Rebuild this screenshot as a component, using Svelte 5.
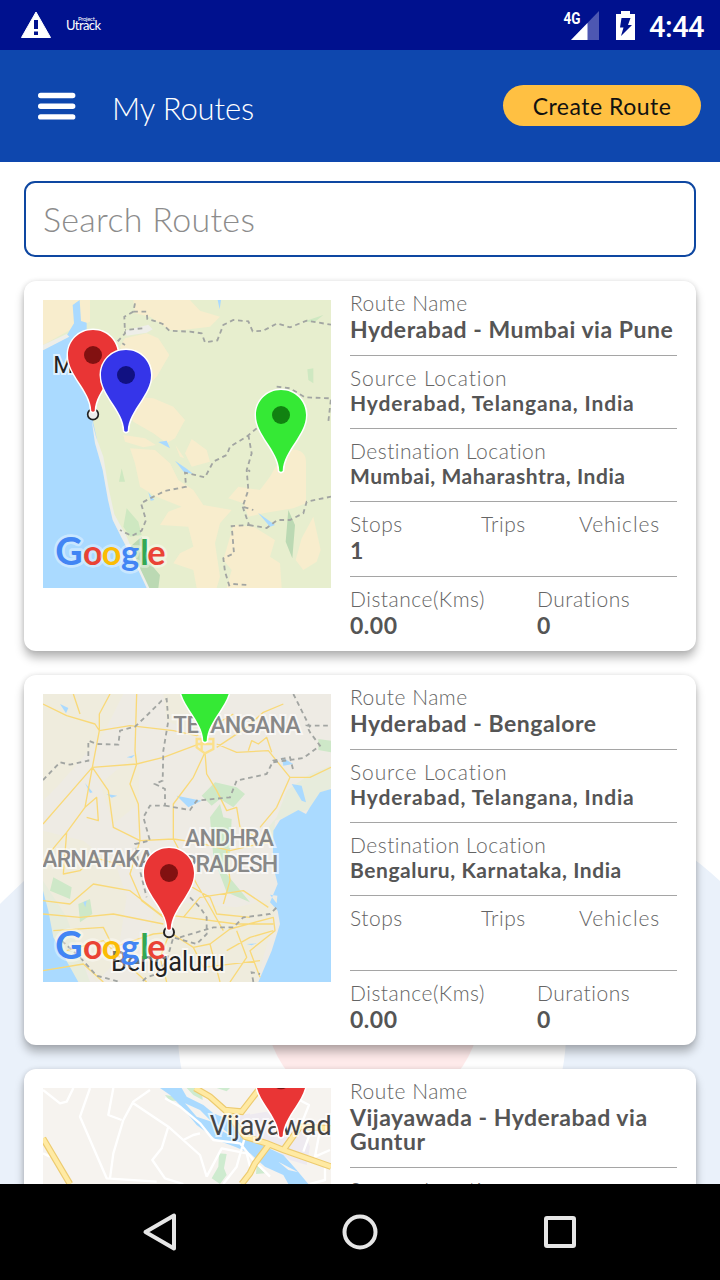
<script>
  const routes = [
    { name: 'Hyderabad - Mumbai via Pune', source: 'Hyderabad, Telangana, India', destination: 'Mumbai, Maharashtra, India', stops: '1', map: 'mumbai' },
    { name: 'Hyderabad - Bengalore', source: 'Hyderabad, Telangana, India', destination: 'Bengaluru, Karnataka, India', stops: '', map: 'bengaluru' },
    { name: 'Vijayawada - Hyderabad via Guntur', source: 'Vijayawada, Andhra Pradesh, India', destination: 'Hyderabad, Telangana, India', stops: '', map: 'vijayawada' }
  ];
</script>

{#snippet pin(x, y, fill, dot)}
  <g transform="translate({x} {y})">
    <path d="M0-75C42-75 75-42 75 0C75 32 58 56 43 80C24 109 6 135 5 168Q0 173-5 168C-6 135-24 109-43 80C-58 56-75 32-75 0C-75-42-42-75 0-75Z" fill={fill} stroke="#fff" stroke-width="9" paint-order="stroke" />
    <circle r="27" fill={dot} />
  </g>
{/snippet}

{#snippet google()}
  <g class="google">
    <text y="825"><tspan class="capital" x="76" fill="#4285f4">G</tspan><tspan x="159" fill="#ea4335">o</tspan><tspan x="215" fill="#fbbc05">o</tspan><tspan x="273" fill="#4285f4">g</tspan><tspan x="331" fill="#34a853">l</tspan><tspan x="352" fill="#ea4335">e</tspan></text>
  </g>
{/snippet}

<div class="screen">
  <div class="status">
    <svg class="warn" width="32" height="28" viewBox="0 0 32 28"><path d="M16 1L30.500 26.500H1.500Z" fill="#fff" stroke="#fff" stroke-linejoin="round" /><path d="M14 9h4v9h-4zM14 20.500h4v3.500h-4z" fill="#00118e" /></svg>
    <div class="carrier">Utrack<span>Project</span></div>
    <div class="indicators">
      <svg width="38" height="34" viewBox="0 0 38 34"><path d="M9 32L37 3V32Z" fill="#4d57b2" /><path d="M9 32L25.500 15V32Z" fill="#fff" /><text x="1.500" y="16" font-family="Roboto" font-size="17" font-weight="700" fill="#fff" textLength="17" lengthAdjust="spacingAndGlyphs">4G</text></svg>
      <svg class="battery" width="20" height="30" viewBox="0 0 20 30"><path d="M5 1h9v3h5v26H0V4h5z" fill="#fff" /><path d="M5.500 8h9l-2.500 7h4L5 26l2.500-8.500H4z" fill="#00118e" /></svg>
      <span class="clock">4:44</span>
    </div>
  </div>

  <header>
    <svg width="38" height="28" viewBox="0 0 38 28"><path d="M2.700 3.500H34.700M2.700 14.200H34.700M2.700 24.900H34.700" stroke="#fff" stroke-width="5.400" stroke-linecap="round" /></svg>
    <h1>My Routes</h1>
    <button>Create Route</button>
  </header>

  <main>
    <svg class="backdrop" width="720" height="1022" viewBox="0 162 720 1022">
      <circle cx="372" cy="1266" r="519" fill="#eaf1fa" />
      <circle cx="372" cy="1033" r="194" fill="#fefefe" />
      <circle cx="373" cy="1006" r="108" fill="#feeaea" />
    </svg>
    <input placeholder="Search Routes" />
    {#each routes as route}
      <article>
        {#if route.map === 'mumbai'}
          <svg class="map" viewBox="39 30 864 864">
            <path fill="#e7eece" d="M39 30H903V894H39Z" />
            <g fill="#f8edcd">
              <path d="M39 30H180V95L120 120L39 165ZM310 30H480L510 62L570 80L540 110L460 120L420 120L360 80L315 70Z" />
              <path d="M285 145L350 130L385 145L418 195L380 260L350 290L300 240L270 170Z" />
              <path d="M290 320L370 325L430 350L465 390L435 445L410 460L370 430L310 395L285 345ZM280 435L345 445L378 465L340 472L285 455ZM485 447L530 480L540 515L485 530L465 490ZM436 465L463 505L450 500Z" />
              <path d="M300 475L375 480L420 520L445 570L490 600L520 645L605 660L570 700L555 760L570 860L560 894H500L490 840L430 820L450 790L490 770L475 710L390 705L415 665L455 650L380 620L330 590L315 520Z" />
              <path d="M765 480Q830 470 828 520V640L790 655L700 670L655 680L640 640L595 625L625 590L690 600L720 560ZM610 705L670 710L735 750L720 800L750 820L755 894H590L605 840L580 810ZM850 680L872 780L860 815L820 840L797 810L815 745Z" />
            </g>
            <path fill="#cee8c1" d="M832 238L850 235V280L835 270ZM275 535L285 575L267 575ZM290 655L325 695L335 735L300 740L280 710ZM820 95L880 75L855 95Z" />
            <path fill="#bbd9b3" d="M335 740L360 820L390 855L385 894H350L325 840L300 770ZM775 660L795 705L787 805L767 755Z" />
            <path fill="#aadaff" d="M128 45L149 30L153 93L170 98V150L190 400Q215 510 238 635Q250 690 310 790L355 894H39V180L105 145L132 100Z" />
            <path fill="#eeeee9" d="M39 165L110 132L118 140L39 181ZM185 390L198 440L220 500L235 590L253 673L290 740L330 835L358 894H350L320 830L273 740L248 690L234 630L218 540L195 460ZM285 122L355 104L368 118L350 128L290 137Z" />
            <path fill="#aadaff" d="M385 456L410 452L420 475ZM435 512L470 536L490 552L462 547ZM355 607L373 630L362 632ZM684 668L735 705L720 710ZM563 30H573L569 58Z" />
            <path class="border" d="M315 40L310 65L350 65L352 87L375 93L398 102L418 122L480 125L515 130L525 157L562 151L580 105L610 90L655 94L668 124L700 122L742 100L780 112L830 92L903 104M310 65L283 80L285 130L265 152L285 165M337 115L285 120M740 290L780 295L825 322L903 325L895 395M680 415L650 440L600 470L590 495L550 515L525 562L465 548L468 590L405 603L360 625L333 640L348 690L335 722L305 738L270 720M655 435L665 490L650 540L655 600L638 650L670 660M655 540L660 545M638 650L657 705L605 708L612 790L580 805L585 845L600 894M657 705L710 714L742 690L780 690L820 670L830 635L903 620M610 882L655 885" />
            <text class="place" x="70" y="248" font-size="70">M</text>
            <circle cx="189" cy="373" r="16" fill="#eee" stroke="#222" stroke-width="5" />
            {@render pin(189, 195, '#e93535', '#821111')}
            {@render pin(288, 255, '#3535e9', '#111182')}
            {@render pin(753, 375, '#35e935', '#118211')}
            {@render google()}
          </svg>
        {:else if route.map === 'bengaluru'}
          <svg class="map" viewBox="39 30 864 864">
            <path fill="#eeebe4" d="M39 30H903V894H39Z" />
            <path fill="#efecdd" d="M39 30H280L220 150L80 310L39 350ZM400 30H520L500 150L410 110ZM210 300L330 200L325 360L250 420ZM39 440L160 470L260 550L290 640L260 830L200 894L39 700ZM380 650L620 670L750 640L680 894H320Z" />
            <path fill="#e7ecdc" d="M903 245L840 270L770 320L740 400L690 460L730 490L735 410L840 375L903 310ZM39 590L110 700L180 894H100L39 700Z" />
            <path fill="#cee8c8" d="M515 335L555 295L620 310L645 330L610 370L570 345L545 365ZM540 400L570 360L580 400L605 405L600 500L590 570L660 655L590 625L550 520ZM70 580L125 610L120 645L60 620ZM145 660L180 645L187 690L150 715ZM865 165L903 170V205L865 198Z" />
            <path fill="#aadaff" d="M903 315L870 325L840 370L828 390L805 378L750 408L730 440L728 540L743 600L720 655L743 680L750 720L725 800L685 894H903ZM39 620L55 680L70 760L145 894H39ZM90 60L115 72L108 88ZM165 297L188 325L180 327ZM230 330L262 335L245 341ZM290 220L315 212L305 222ZM440 335L515 350L475 370ZM755 220L790 240L760 245ZM785 300L815 305L828 355L815 350ZM160 655L170 650L166 670ZM650 780L680 778L665 784ZM720 632L742 635L740 658Z" />
            <path class="road" d="M39 60L110 95L195 120L208 140L300 125L430 140L500 155L610 90M130 30L150 90M240 30L208 90V140L187 250L39 420M187 250L320 240L400 220L520 175M187 250L165 370L110 445L39 530M187 250L235 320L250 430L330 470L430 465L500 475L600 500L730 470M320 30L315 200M315 200L320 240L300 300L325 360L330 470L300 570L335 650L400 700L420 745M525 205L530 270L560 320L590 380L620 370L630 430L680 460M525 205L490 280L430 360L430 465L470 540L500 600L535 660L580 740M560 180L620 205L715 200L780 280L840 280L903 250M780 280L740 370L690 430M560 190L650 130L700 85L760 60M655 200L665 170L685 180L710 160L725 205M110 445L100 570L150 560L190 520L300 550M39 650L120 660L190 600L300 620L390 690L470 700L620 720L730 720M39 690L150 700L250 690L400 720M70 740L220 730L250 790L370 750L420 745M110 800L220 770L280 830L350 894M420 745L490 790L540 780L600 735L730 700L735 740L660 800L690 880M420 745L390 820L410 894M540 780L570 894M490 790L520 850L690 830M620 740L650 820L600 894M470 600L540 640L560 690L660 700M590 500L600 590L580 660M165 370L200 340L205 410L170 400M39 860L160 840L220 894M730 740L660 760L590 800M460 700L510 640L640 620L715 670" />
            <path d="M500 165H550V195L525 208L500 190ZM515 165V200M500 180H550" fill="none" stroke="#fbe08b" stroke-width="7" />
            <path class="border" d="M39 288L90 235L120 242L175 230V170L200 180L265 182L270 140L315 128L355 90L395 50L410 45L415 110L400 200L398 290L375 300L405 315L405 365L360 365L340 400L360 470L315 480L330 560L350 640M405 365L480 378L500 350L600 340L620 290L710 270L730 230L780 220L790 260M730 235L820 222L870 185L840 145L830 125H903M790 30L820 90L840 130M480 640L510 670L530 700L530 750L500 780L430 760L410 830L380 870L350 880L335 894M95 770L150 820L200 875L270 894M450 760L550 730L610 730L640 700L720 690L740 670M670 894L665 865L690 870" />
            <text class="state" x="430" y="147" textLength="382">TELANGANA</text>
            <text class="state" x="465" y="486" textLength="267">ANDHRA</text>
            <text class="state" x="456" y="563" textLength="289">PRADESH</text>
            <text class="state" x="37" y="548" textLength="336">ARNATAKA</text>
            <text class="place" x="243" y="860" font-size="82" textLength="341" lengthAdjust="spacingAndGlyphs">Bengaluru</text>
            <circle cx="417" cy="745" r="15" fill="#eee" stroke="#222" stroke-width="6" />
            {@render pin(525, 3, '#35e935', '#118211')}
            {@render pin(417, 567, '#e93535', '#821111')}
            {@render google()}
          </svg>
        {:else}
          <svg class="map" viewBox="129 324 864 864">
            <path fill="#f6f3ef" d="M129 324H993V1188H129Z" />
            <path fill="#eeeaf0" d="M740 405L800 395L840 430L900 420L930 500L920 555L870 540L820 505L745 470ZM700 410L750 400L740 440Z" />
            <path fill="#ceebcf" d="M495 345L530 350L545 362L510 362ZM560 324H605L608 360L580 345ZM650 324H690L680 334ZM657 520L680 522L672 565L680 585L660 612L635 595L655 560ZM770 555L795 580L768 582Z" />
            <path fill="#aadaff" d="M480 324H545L560 350L610 375L640 400L690 420L720 465L775 490L850 525L890 570L925 612H865L850 585L795 560L750 520L705 500L650 480L590 435L545 380L510 345Z" />
            <path fill="#f6f3ef" d="M555 370L600 390L635 425L590 410ZM640 425L700 470L670 455ZM835 545L895 577L865 570Z" />
            <path d="M129 330L180 370L200 365L220 324M270 324L240 410L320 595L470 605M330 595L340 520L370 420L400 365L450 330M495 355L540 380L600 430L640 480L720 490L760 540L810 590M340 324L325 405L365 420M400 370L505 440L600 525L620 590M505 440L485 505L457 540L495 595L550 612M550 480L580 465L600 460M620 590L665 505L740 520L750 560M860 400L880 350L927 375L905 430L930 460L910 515M990 510L945 530L960 450M975 560V600L930 612M129 520L150 530M735 470L710 560L670 612" fill="none" stroke="#fff" stroke-width="7" stroke-linejoin="round" />
            <path class="highway-edge" d="M129 475L210 612M585 324L630 350L675 390L725 395L780 324M675 390L735 470L800 490L850 510L993 560M850 510L900 440L993 445M810 490L765 550L750 580L725 612" />
            <path class="highway" d="M129 475L210 612M585 324L630 350L675 390L725 395L780 324M675 390L735 470L800 490L850 510L993 560M850 510L900 440L993 445M810 490L765 550L750 580L725 612" />
            <text class="place town" x="629" y="465" font-size="85" textLength="410" lengthAdjust="spacingAndGlyphs">Vijayawada</text>
            {@render pin(843, 301, '#e93535', '#821111')}
          </svg>
        {/if}
        <div class="details">
          <section><label>Route Name</label><strong>{route.name}</strong></section>
          <section class="location"><label class="wide">Source Location</label><strong class="source">{route.source}</strong></section>
          <section class="location"><label>Destination Location</label><strong>{route.destination}</strong></section>
          <section class="counts">
            <div><label>Stops</label><strong>{route.stops}</strong></div>
            <div><label>Trips</label></div>
            <div><label class="wide">Vehicles</label></div>
          </section>
          <section class="totals">
            <div><label>Distance(Kms)</label><strong>0.00</strong></div>
            <div><label>Durations</label><strong>0</strong></div>
          </section>
        </div>
      </article>
    {/each}
  </main>

  <nav>
    <svg width="40" height="40" viewBox="0 0 40 40"><path d="M34 3.500V36.500L5.500 20Z" /></svg>
    <svg width="40" height="40" viewBox="0 0 40 40"><circle cx="20" cy="20" r="15.500" /></svg>
    <svg width="40" height="40" viewBox="0 0 40 40"><rect x="6" y="6" width="28" height="28" rx="1" /></svg>
  </nav>
</div>

<style>
  :global(body) { margin: 0; }
  * { box-sizing: border-box; }
  .screen { width: 720px; height: 1280px; display: flex; flex-direction: column; overflow: hidden; background: #fff; font-family: Lato, "Open Sans", sans-serif; }
  .status { flex: none; height: 50px; background: #00118e; color: #fff; display: flex; align-items: center; padding: 0 17px 0 20px; }
  .warn { margin-top: -1px; }
  .carrier { position: relative; margin-left: 14px; font-size: 13px; line-height: 20px; width: 36px; letter-spacing: -.6px; }
  .carrier span { position: absolute; left: 12px; top: -3px; font-size: 6px; line-height: 14px; letter-spacing: -.3px; }
  .indicators { margin-left: auto; display: flex; align-items: center; }
  .battery { margin: -1px 13px 0 16px; }
  .clock { font: 500 29px/34px Roboto, sans-serif; width: 54px; white-space: nowrap; letter-spacing: -0.5px; padding-top: 3px; }
  header { flex: none; height: 112px; background: #0e47ae; display: flex; align-items: center; padding: 0 19px 0 38px; }
  h1 { margin: 4px 0 0 36px; color: #fff; font-size: 31px; line-height: 38px; font-weight: 300; letter-spacing: -.1px; }
  button { margin: 0 0 1px auto; width: 198px; height: 41px; border: 0; border-radius: 21px; background: #ffc042; color: #111; font: 400 23px/38px Lato, sans-serif; letter-spacing: .5px; padding: 0; }
  main { position: relative; flex: 1; min-height: 0; overflow: hidden; padding: 19px 24px 0; display: flex; flex-direction: column; gap: 24px; }
  .backdrop { position: absolute; left: 0; top: 0; }
  input { position: relative; flex: none; height: 76px; border: 2px solid #0e47a1; border-radius: 11px; background: #fff; padding: 0 17px 2px; font: 300 34px Lato, sans-serif; letter-spacing: .3px; outline: 0; }
  input::placeholder { color: #8c8c8c; opacity: 1; }
  article { position: relative; flex: none; display: flex; gap: 19px; padding: 0 19px; border-radius: 12px; background: #fff; box-shadow: 0 7px 10px rgba(0,0,0,.27), 0 0 5px rgba(0,0,0,.12); }
  .map { flex: none; width: 288px; height: 288px; margin-top: 19px; overflow: hidden; }
  .details { flex: 1; min-width: 0; }
  section { padding: 9px 0 13px; border-bottom: 1px solid #a5a5a5; }
  section:last-child { border: 0; }
  label { display: block; font-size: 21px; line-height: 26px; margin-bottom: 1px; font-weight: 300; color: #656565; white-space: nowrap; letter-spacing: .5px; }
  label.wide { letter-spacing: .9px; }
  strong { display: block; font-size: 23px; line-height: 24px; min-height: 25px; padding-bottom: 1px; font-weight: 700; color: #555; letter-spacing: .52px; white-space: nowrap; }
  section:first-child strong { white-space: normal; }
  .location label { margin-bottom: 0; }
  .location strong { font-size: 21px; line-height: 23px; min-height: 24px; letter-spacing: .56px; }
  .location strong.source { letter-spacing: .87px; }
  .counts { display: grid; grid-template-columns: 131px 98px 98px; }
  .totals { display: grid; grid-template-columns: 187px 140px; }
  .border { fill: none; stroke: #a2a5a2; stroke-width: 5.5; stroke-dasharray: 14 11; }
  .road { fill: none; stroke: #f9d978; stroke-width: 4; stroke-linejoin: round; }
  .highway-edge { fill: none; stroke: #edcb70; stroke-width: 20; }
  .highway { fill: none; stroke: #ffeaa3; stroke-width: 13; }
  .place { font-family: Roboto, sans-serif; fill: #222; stroke: rgba(255,255,255,.65); stroke-width: 12; paint-order: stroke; }
  .town { fill: #444; }
  .state { font: 500 70px Roboto, sans-serif; fill: #888; stroke: rgba(255,255,255,.6); stroke-width: 12; paint-order: stroke; }
  .google { font: 700 103px Lato, sans-serif; stroke: rgba(255,255,255,.4); stroke-width: 16; stroke-linejoin: round; paint-order: stroke; }
  .capital { font-size: 113px; }
  nav { flex: none; height: 96px; background: #000; display: flex; justify-content: center; align-items: center; gap: 160px; }
  nav svg { fill: none; stroke: #e6e6e6; stroke-width: 4; stroke-linejoin: round; }
</style>
